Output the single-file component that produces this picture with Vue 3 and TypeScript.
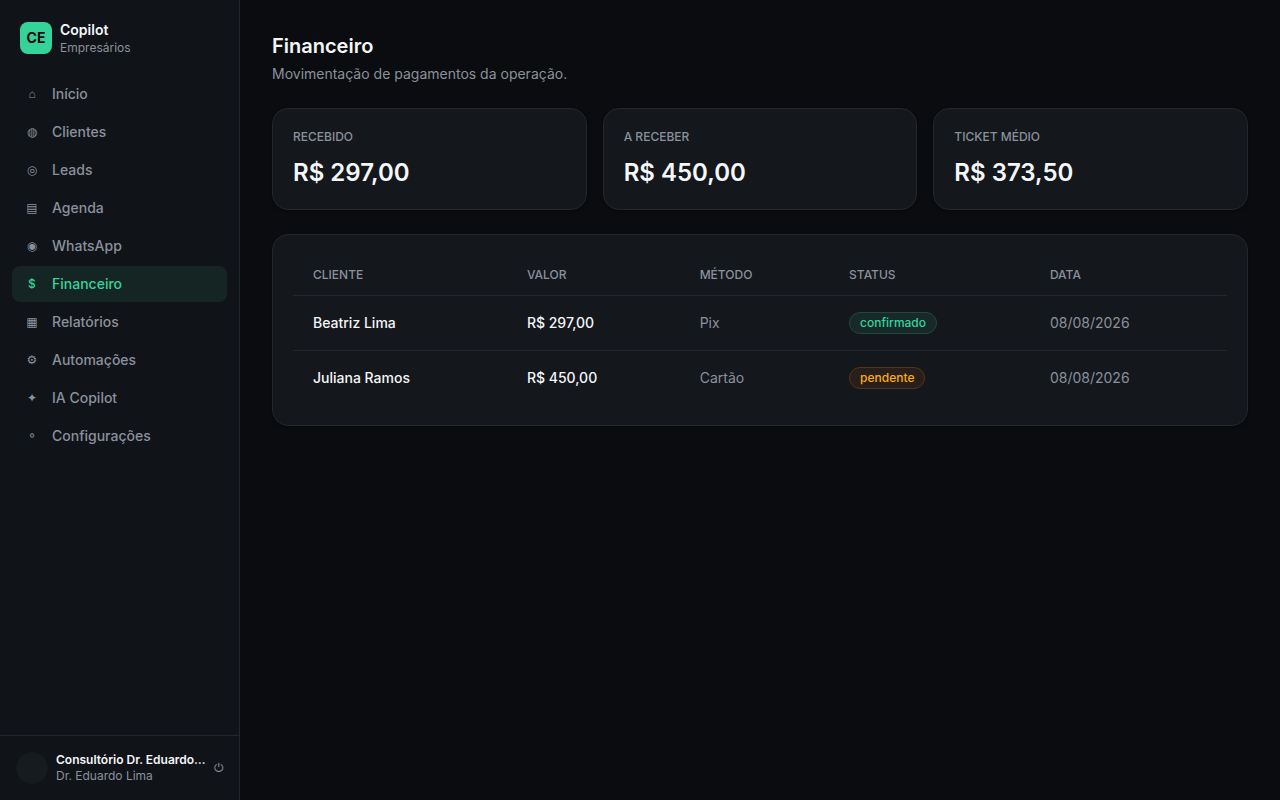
<script setup lang="ts">
interface NavItem {
  icon: string
  label: string
}

interface Payment {
  client: string
  amount: string
  method: string
  status: 'confirmado' | 'pendente'
  date: string
}

const nav: NavItem[] = [
  { icon: '⌂', label: 'Início' },
  { icon: '◍', label: 'Clientes' },
  { icon: '◎', label: 'Leads' },
  { icon: '▤', label: 'Agenda' },
  { icon: '◉', label: 'WhatsApp' },
  { icon: '$', label: 'Financeiro' },
  { icon: '▦', label: 'Relatórios' },
  { icon: '⚙', label: 'Automações' },
  { icon: '✦', label: 'IA Copilot' },
  { icon: '⚬', label: 'Configurações' },
]
const active = 'Financeiro'

const stats = [
  { label: 'RECEBIDO', value: 'R$ 297,00' },
  { label: 'A RECEBER', value: 'R$ 450,00' },
  { label: 'TICKET MÉDIO', value: 'R$ 373,50' },
]

const payments: Payment[] = [
  { client: 'Beatriz Lima', amount: 'R$ 297,00', method: 'Pix', status: 'confirmado', date: '08/08/2026' },
  { client: 'Juliana Ramos', amount: 'R$ 450,00', method: 'Cartão', status: 'pendente', date: '08/08/2026' },
]
</script>

<template>
  <div class="shell">
    <aside class="sidebar">
      <div class="brand">
        <div class="logo">CE</div>
        <div>
          <div class="brand-name">Copilot</div>
          <div class="brand-sub">Empresários</div>
        </div>
      </div>
      <nav class="nav">
        <a
          v-for="item in nav"
          :key="item.label"
          href="#"
          class="nav-item"
          :class="{ active: item.label === active }"
        >
          <span class="nav-icon" aria-hidden="true">{{ item.icon }}</span>
          <span>{{ item.label }}</span>
        </a>
      </nav>
      <div class="account">
        <div class="avatar"></div>
        <div class="account-text">
          <div class="account-name">Consultório Dr. Eduardo…</div>
          <div class="account-user">Dr. Eduardo Lima</div>
        </div>
        <button class="logout" type="button" aria-label="Sair">⏻</button>
      </div>
    </aside>

    <main class="main">
      <header>
        <h1>Financeiro</h1>
        <p class="subtitle">Movimentação de pagamentos da operação.</p>
      </header>

      <section class="stats">
        <div v-for="s in stats" :key="s.label" class="card">
          <div class="stat-label">{{ s.label }}</div>
          <div class="stat-value">{{ s.value }}</div>
        </div>
      </section>

      <section class="card">
        <table>
          <thead>
            <tr>
              <th class="c-client">CLIENTE</th>
              <th class="c-amount">VALOR</th>
              <th class="c-method">MÉTODO</th>
              <th class="c-status">STATUS</th>
              <th>DATA</th>
            </tr>
          </thead>
          <tbody>
            <tr v-for="p in payments" :key="p.client">
              <td class="strong">{{ p.client }}</td>
              <td class="strong">{{ p.amount }}</td>
              <td>{{ p.method }}</td>
              <td><span class="badge" :class="p.status">{{ p.status }}</span></td>
              <td>{{ p.date }}</td>
            </tr>
          </tbody>
        </table>
      </section>
    </main>
  </div>
</template>

<style>
body {
  margin: 0;
  background: #0b0c0f;
}
</style>

<style scoped>
.shell {
  display: flex;
  min-height: 100vh;
  font-family: Inter, 'Liberation Sans', 'DejaVu Sans', sans-serif;
  font-size: 14px;
  line-height: 20px;
  color: #f4f6f8;
}
.sidebar {
  box-sizing: border-box;
  width: 240px;
  flex: none;
  height: 100vh;
  position: sticky;
  top: 0;
  display: flex;
  flex-direction: column;
  background: #101318;
  border-right: 1px solid #23272d;
}
.brand {
  display: flex;
  align-items: center;
  gap: 8px;
  padding: 20px;
}
.logo {
  display: grid;
  place-items: center;
  width: 32px;
  height: 32px;
  border-radius: 8px;
  background: #34d399;
  color: #0b0c0f;
  font-weight: 700;
}
.brand-name {
  font-weight: 600;
}
.brand-sub {
  font-size: 12px;
  line-height: 16px;
  color: #8a919c;
}
.nav {
  flex: 1;
  display: flex;
  flex-direction: column;
  gap: 2px;
  padding: 0 12px;
}
.nav-item {
  display: flex;
  align-items: center;
  gap: 12px;
  padding: 8px 12px;
  border-radius: 8px;
  color: #8a919c;
  font-weight: 500;
  text-decoration: none;
}
.nav-item.active {
  background: #142523;
  color: #34d399;
}
.nav-icon {
  width: 16px;
  font-size: 12px;
  text-align: center;
}
.account {
  display: flex;
  align-items: center;
  gap: 8px;
  padding: 16px;
  border-top: 1px solid #23272d;
}
.avatar {
  width: 32px;
  height: 32px;
  flex: none;
  border-radius: 50%;
  background: #151b1f;
}
.account-text {
  flex: 1;
  min-width: 0;
  font-size: 12px;
  line-height: 16px;
}
.account-name {
  font-weight: 600;
  white-space: nowrap;
}
.account-user {
  color: #8a919c;
}
.logout {
  flex: none;
  padding: 0;
  border: 0;
  background: none;
  color: #8a919c;
  font: inherit;
  font-size: 12px;
  line-height: 16px;
  cursor: pointer;
}
.main {
  flex: 1;
  min-width: 0;
  display: flex;
  flex-direction: column;
  gap: 24px;
  padding: 32px;
}
h1 {
  margin: 0;
  font-size: 20px;
  line-height: 28px;
  font-weight: 600;
}
.subtitle {
  margin: 4px 0 0;
  color: #8a919c;
}
.stats {
  display: grid;
  grid-template-columns: repeat(3, 1fr);
  gap: 16px;
}
.card {
  padding: 20px;
  border: 1px solid #23272d;
  border-radius: 16px;
  background: #14171c;
  box-shadow: 0 1px 3px rgba(0, 0, 0, 0.4);
}
.stat-label {
  font-size: 12px;
  line-height: 16px;
  font-weight: 500;
  color: #8a919c;
}
.stat-value {
  margin-top: 12px;
  font-size: 24px;
  line-height: 32px;
  font-weight: 600;
}
table {
  width: 100%;
  table-layout: fixed;
  border-collapse: separate;
  border-spacing: 0;
}
th,
td {
  box-sizing: border-box;
}
th {
  padding: 12px 20px;
  border-bottom: 1px solid #23272d;
  font-size: 12px;
  line-height: 16px;
  font-weight: 500;
  text-align: left;
  color: #8a919c;
}
.c-client {
  width: 22.9%;
}
.c-amount {
  width: 18.5%;
}
.c-method {
  width: 16%;
}
.c-status {
  width: 21.5%;
}
td {
  padding: 16px 20px;
  color: #8a919c;
}
tbody tr:not(:last-child) td {
  border-bottom: 1px solid #23272d;
}
td.strong {
  color: #f4f6f8;
  font-weight: 500;
}
.badge {
  display: inline-block;
  vertical-align: middle;
  padding: 2px 10px;
  border: 1px solid;
  border-radius: 11px;
  font-size: 12px;
  line-height: 16px;
  font-weight: 500;
}
.confirmado {
  color: #34d399;
  background: #172a29;
  border-color: #1d4a3e;
}
.pendente {
  color: #fbab16;
  background: #291f1a;
  border-color: #56321c;
}
</style>
